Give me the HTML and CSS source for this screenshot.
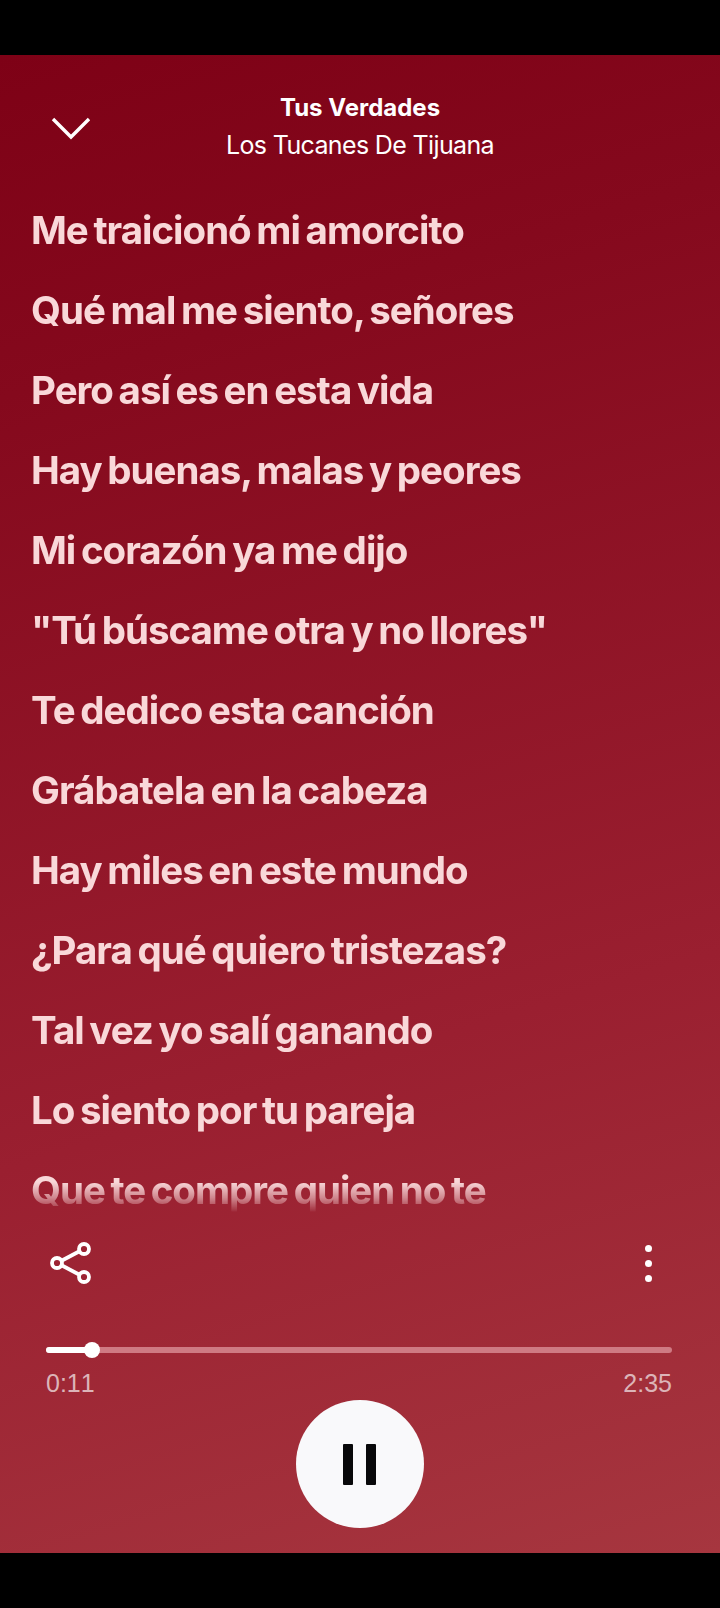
FILE: index.html
```html
<!DOCTYPE html>
<html lang="es">
<head>
    <meta charset="UTF-8">
    <meta name="viewport" content="width=device-width, initial-scale=1.0">
    <title>Tus Verdades</title>
    <link rel="stylesheet" href="styles.css">
</head>
<body>

    <div class="player">
        <div class="topBar">
            <svg class="chevron" width="40" height="24" viewBox="0 0 40 24" fill="none" stroke="#fff" stroke-width="3.4">
                <path d="M2 3 L20 21 L38 3"/>
            </svg>
            <div class="songInfo">
                <div class="songTitle">Tus Verdades</div>
                <div class="songArtist">Los Tucanes De Tijuana</div>
            </div>
        </div>

        <div class="lyrics">
            <p>Me traicionó mi amorcito</p>
            <p>Qué mal me siento, señores</p>
            <p>Pero así es en esta vida</p>
            <p>Hay buenas, malas y peores</p>
            <p>Mi corazón ya me dijo</p>
            <p>"Tú búscame otra y no llores"</p>
            <p>Te dedico esta canción</p>
            <p>Grábatela en la cabeza</p>
            <p>Hay miles en este mundo</p>
            <p>¿Para qué quiero tristezas?</p>
            <p>Tal vez yo salí ganando</p>
            <p>Lo siento por tu pareja</p>
            <p>Que te compre quien no te</p>
        </div>

        <div class="actions">
            <svg width="42" height="42" viewBox="0 0 42 42" fill="none" stroke="#fff" stroke-width="3.8">
                <circle cx="34" cy="7" r="5"/>
                <circle cx="7" cy="21" r="5"/>
                <circle cx="34" cy="35" r="5"/>
                <path d="M11.5 18.7 L29.5 9.3 M11.5 23.3 L29.5 32.7"/>
            </svg>
            <div class="moreDots">
                <span></span>
                <span></span>
                <span></span>
            </div>
        </div>

        <div class="progress">
            <div class="progressDone"></div>
            <div class="progressKnob"></div>
        </div>
        <div class="times">
            <span>0:11</span>
            <span>2:35</span>
        </div>

        <div class="controls">
            <div class="pauseBtn">
                <span></span>
                <span></span>
            </div>
        </div>
    </div>

</body>
</html>
```

FILE: styles.css
```css
html, body {
    margin: 0;
    height: 100%;
}

body {
    font-family: Inter, 'Liberation Sans', sans-serif;
    background-color: #000;
    color: #fff;
    padding: 55px 0;
    box-sizing: border-box;
    height: 1608px;
    overflow: hidden;
}

.player {
    height: 1498px;
    box-sizing: border-box;
    background: linear-gradient(163deg, #7e0116 0%, #85091d 20%, #9a1f30 65%, #a6363f 100%);
    padding-top: 38px;
}

.topBar {
    position: relative;
    height: 74px;
    text-align: center;
}

.chevron {
    position: absolute;
    left: 51px;
    top: 23px;
}

.songTitle {
    font-size: 24px;
    font-weight: 700;
    line-height: 30px;
}

.songArtist {
    font-size: 25px;
    line-height: 44px;
    letter-spacing: -0.64px;
}

.lyrics {
    height: 1023px;
    margin-top: 23px;
    padding-left: 31px;
    overflow: hidden;
    -webkit-mask-image: linear-gradient(to bottom, #000 992px, rgba(0, 0, 0, 0.55) 1008px, transparent 1023px);
    mask-image: linear-gradient(to bottom, #000 992px, rgba(0, 0, 0, 0.55) 1008px, transparent 1023px);
}

.lyrics p {
    margin: 0;
    height: 80px;
    font-size: 38.5px;
    font-weight: 700;
    line-height: 80px;
    letter-spacing: -1px;
    word-spacing: -2.5px;
    white-space: nowrap;
    color: #f9d8d9;
}

.actions {
    display: flex;
    justify-content: space-between;
    align-items: center;
    padding: 0 68px 0 50px;
    height: 42px;
    margin-top: 29px;
}

.moreDots {
    display: flex;
    flex-direction: column;
    gap: 8px;
}

.moreDots span {
    width: 7px;
    height: 7px;
    border-radius: 50%;
    background-color: #fff;
}

.progress {
    position: relative;
    margin: 63px 48px 0 46px;
    height: 6px;
    border-radius: 3px;
    background-color: #cf7a83;
}

.progressDone {
    width: 46px;
    height: 6px;
    border-radius: 3px;
    background-color: #fff;
}

.progressKnob {
    position: absolute;
    left: 38px;
    top: -5px;
    width: 16px;
    height: 16px;
    border-radius: 50%;
    background-color: #fff;
}

.times {
    display: flex;
    justify-content: space-between;
    margin: 16px 48px 0 46px;
    font-family: 'Liberation Sans', sans-serif;
    font-size: 25px;
    line-height: 28px;
    font-kerning: none;
    color: #dcb4b8;
}

.controls {
    display: flex;
    justify-content: center;
    margin-top: 3px;
    padding-right: 1px;
}

.pauseBtn {
    display: flex;
    justify-content: center;
    align-items: center;
    gap: 13px;
    width: 128px;
    height: 128px;
    border-radius: 50%;
    background-color: #f9f9fb;
}

.pauseBtn span {
    width: 10px;
    height: 41px;
    border-radius: 1px;
    background-color: #08080a;
}
```
